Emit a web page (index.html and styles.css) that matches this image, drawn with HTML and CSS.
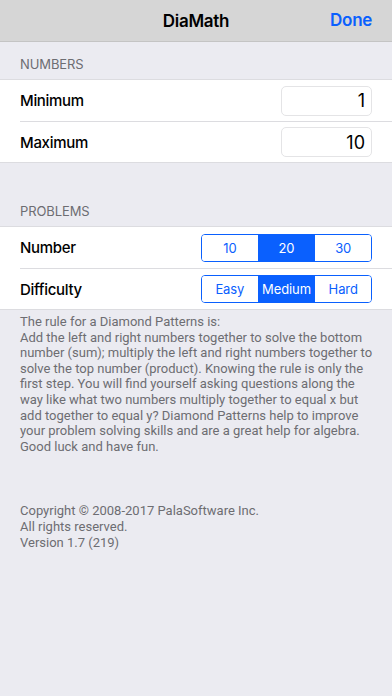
FILE: index.html
```html
<!DOCTYPE html>
<html lang="en">
<head>
    <meta charset="UTF-8">
    <meta name="viewport" content="width=device-width, initial-scale=1.0">
    <title>DiaMath - Settings</title>
    <link rel="stylesheet" href="styles.css">
</head>
<body>
    <header class="nav-bar">
        <h1 class="nav-title">DiaMath</h1>
        <button class="nav-done">Done</button>
    </header>

    <div class="section-header first">NUMBERS</div>
    <section class="group">
        <div class="row">
            <span class="row-label">Minimum</span>
            <input class="number-field" type="text" value="1">
        </div>
        <div class="row">
            <span class="row-label">Maximum</span>
            <input class="number-field" type="text" value="10">
        </div>
    </section>

    <div class="section-header">PROBLEMS</div>
    <section class="group">
        <div class="row">
            <span class="row-label">Number</span>
            <div class="segmented">
                <button class="segment">10</button>
                <button class="segment active">20</button>
                <button class="segment">30</button>
            </div>
        </div>
        <div class="row">
            <span class="row-label">Difficulty</span>
            <div class="segmented">
                <button class="segment">Easy</button>
                <button class="segment active">Medium</button>
                <button class="segment">Hard</button>
            </div>
        </div>
    </section>

    <div class="footer">
        <p class="rules">The rule for a Diamond Patterns is:<br>Add the left and right numbers together to solve the bottom number (sum); multiply the left and right numbers together to solve the top number (product). Knowing the rule is only the first step. You will find yourself asking questions along the way like what two numbers multiply together to equal x but add together to equal y? Diamond Patterns help to improve your problem solving skills and are a great help for algebra. Good luck and have fun.</p>
        <p class="copyright">Copyright © 2008-2017 PalaSoftware Inc.<br>All rights reserved.<br>Version 1.7 (219)</p>
    </div>
</body>
</html>
```

FILE: styles.css
```css
:root {
    --tint-color: #0a60fe;
    --background-color: #ebebf1;
    --nav-color: #d6d6d6;
    --separator-color: #dcdce0;
    --secondary-text: #6d6d72;
}

* {
    margin: 0;
    padding: 0;
    box-sizing: border-box;
}

body {
    font-family: 'Inter', 'Roboto', sans-serif;
    background-color: var(--background-color);
    color: #000;
    width: 392px;
    min-height: 696px;
}

.nav-bar {
    height: 42px;
    background-color: var(--nav-color);
    border-bottom: 1px solid #c4c4c4;
    display: flex;
    align-items: center;
    justify-content: center;
    position: relative;
}

.nav-title {
    font-size: 17px;
    font-weight: 600;
    letter-spacing: -0.3px;
}

.nav-done {
    position: absolute;
    right: 20px;
    top: 10px;
    background: none;
    border: none;
    font-family: inherit;
    font-size: 17px;
    font-weight: 600;
    letter-spacing: -0.3px;
    color: var(--tint-color);
}

.section-header {
    font-size: 13px;
    color: var(--secondary-text);
    padding: 0 20px 7px;
    height: 63px;
    display: flex;
    align-items: flex-end;
    letter-spacing: -0.1px;
}

.section-header.first {
    height: 37px;
}

.group {
    background-color: #fff;
    border-top: 1px solid var(--separator-color);
    border-bottom: 1px solid var(--separator-color);
}

.row {
    height: 41px;
    margin-left: 20px;
    padding-right: 20px;
    display: flex;
    align-items: center;
    justify-content: space-between;
}

.row + .row {
    border-top: 1px solid var(--separator-color);
}

.row-label {
    font-size: 15px;
    font-weight: 500;
    letter-spacing: -0.3px;
}

.number-field {
    width: 91px;
    height: 30px;
    border: 1px solid #e4e4e6;
    border-radius: 5px;
    font-family: inherit;
    font-size: 18px;
    text-align: right;
    padding: 0 6px;
    color: #000;
    background: #fff;
}

.segmented {
    display: flex;
    width: 171px;
    height: 28px;
    border: 1px solid var(--tint-color);
    border-radius: 4px;
    overflow: hidden;
}

.segment {
    flex: 1;
    background: #fff;
    border: none;
    font-family: inherit;
    font-size: 13px;
    color: var(--tint-color);
    letter-spacing: -0.1px;
}

.segment + .segment {
    border-left: 1px solid var(--tint-color);
}

.segment.active {
    background-color: var(--tint-color);
    color: #fff;
}

.footer {
    padding: 4px 16px 6px 20px;
    font-family: 'Roboto', sans-serif;
    font-size: 13px;
    line-height: 15.6px;
    color: var(--secondary-text);
}

.copyright {
    margin-top: 49px;
}
```
